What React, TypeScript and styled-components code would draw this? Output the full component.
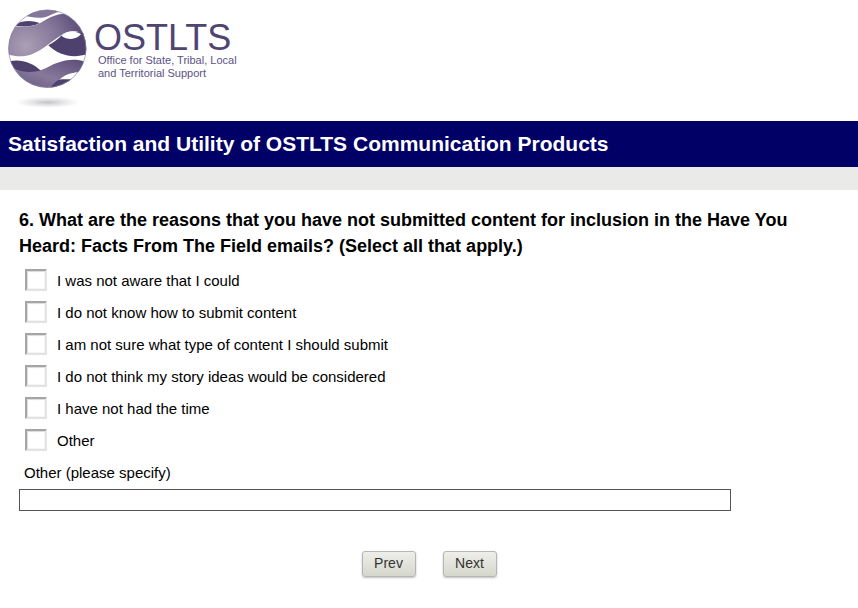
import React from "react";
import styled, { createGlobalStyle } from "styled-components";

const GlobalStyle = createGlobalStyle`
  *, *::before, *::after { box-sizing: border-box; }
  body {
    margin: 0;
    background: #fff;
    color: #000;
    font-family: "Liberation Sans", Arial, Helvetica, sans-serif;
  }
`;

const Brand = styled.header`
  display: flex;
  align-items: flex-start;
  height: 121px;
`;

const Emblem = styled.svg`
  flex: none;
  width: 94px;
  height: 115px;
`;

const BrandText = styled.div`
  display: flex;
  flex-direction: column;
  padding-top: 21px;
  color: #4f4571;
`;

const BrandName = styled.div`
  font-size: 36px;
  line-height: 33px;
`;

const Tagline = styled.div`
  padding-left: 4px;
  font-size: 11px;
  line-height: 13px;
  color: #5c5286;
`;

const TitleBar = styled.h1`
  margin: 0;
  padding: 10px 8px;
  background: #000066;
  color: #fff;
  font-size: 21px;
  line-height: 26px;
  font-weight: bold;
`;

const Divider = styled.div`
  height: 23px;
  background: #eaeae8;
`;

const Form = styled.form`
  padding: 17px 19px 24px;
`;

const Question = styled.fieldset`
  margin: 0;
  padding: 0;
  border: 0;
  min-width: 0;
`;

const Prompt = styled.legend`
  padding: 0;
  font-size: 18px;
  line-height: 26px;
  font-weight: bold;
`;

const Options = styled.ul`
  list-style: none;
  margin: 0;
  padding: 5px 0 0 6px;
`;

const Option = styled.label`
  display: flex;
  align-items: center;
  gap: 10px;
  width: fit-content;
  height: 32px;
  font-size: 15px;
  line-height: 18px;
`;

const OptionText = styled.span`
  padding-top: 1px;
`;

const Tick = styled.input`
  appearance: none;
  flex: none;
  width: 22px;
  height: 22px;
  margin: 0;
  background: #fff;
  border: 2px solid;
  border-color: #a5a5a5 #e3e3e3 #e3e3e3 #a5a5a5;
  box-shadow: inset 1px 1px 1px #dcdcdc, inset -1px -1px 1px #f3f3f3;

  &:checked { background: #000066; }
`;

const OtherField = styled.div`
  display: flex;
  flex-direction: column;
  align-items: flex-start;
  gap: 7px;
  padding-top: 8px;
`;

const OtherLabel = styled.label`
  padding-left: 5px;
  font-size: 15px;
  line-height: 18px;
`;

const OtherInput = styled.input`
  width: 712px;
  max-width: 100%;
  height: 22px;
  padding: 0 4px;
  border: 1px solid #555;
  background: #fff;
  font: inherit;
  font-size: 15px;
`;

const Actions = styled.div`
  display: flex;
  justify-content: center;
  gap: 27px;
  padding-top: 40px;
`;

const NavButton = styled.button`
  width: 54px;
  height: 26px;
  padding: 0 0 2px;
  border: 1px solid #b5b5b5;
  border-radius: 3px;
  background: linear-gradient(#efefea, #d5d6cb);
  box-shadow: 0 1px 2px rgba(0, 0, 0, 0.25);
  color: #333;
  font-family: inherit;
  font-size: 14px;
  line-height: 18px;
`;

const reasons = [
  "I was not aware that I could",
  "I do not know how to submit content",
  "I am not sure what type of content I should submit",
  "I do not think my story ideas would be considered",
  "I have not had the time",
  "Other",
];

function GlobeEmblem() {
  return (
    <Emblem viewBox="0 0 282 345" aria-hidden="true">
      <defs>
        <radialGradient id="band" gradientUnits="userSpaceOnUse" cx="78" cy="138" r="175">
          <stop offset="0" stopColor="#aa9fb4" />
          <stop offset="0.55" stopColor="#84769a" />
          <stop offset="1" stopColor="#5a4d78" />
        </radialGradient>
        <linearGradient id="lower" x1="0" y1="1" x2="1" y2="0">
          <stop offset="0" stopColor="#62557f" />
          <stop offset="0.45" stopColor="#87799b" />
          <stop offset="1" stopColor="#5a4d78" />
        </linearGradient>
        <radialGradient id="ground">
          <stop offset="0" stopColor="#c2c2c6" />
          <stop offset="0.5" stopColor="#e6e6e8" />
          <stop offset="1" stopColor="#fff" />
        </radialGradient>
        <clipPath id="sphere">
          <circle cx="142" cy="146" r="117" />
        </clipPath>
      </defs>
      <ellipse cx="143" cy="307" rx="96" ry="17" fill="url(#ground)" />
      <circle cx="142" cy="146" r="117" fill="#fff" />
      <g clipPath="url(#sphere)">
        <path d="M80 49C105 54 130 57 152 45C166 37 182 33 200 34L180 20H110Z" fill="#84769a" />
        <path d="M48 73C68 61 94 60 119 69C101 79 76 82 44 77Z" fill="#4e416d" />
        <path d="M145 136C162 127 175 117 185 106C205 95 228 93 262 100V162C222 176 178 168 145 136Z" fill="#4e416d" />
        <path d="M20 77C60 81 91 84 122 68C150 53 172 38 205 42L245 60L270 120C256 104 243 97 226 94C208 92 195 97 181 107C151 127 128 149 99 161C70 173 45 170 20 161Z" fill="url(#band)" />
        <path d="M184 107C200 92 226 90 243 103C228 120 203 121 184 107Z" fill="#fff" />
        <path d="M28 184C62 176 95 187 123 212C99 224 66 222 38 204Z" fill="#4e416d" />
        <path d="M34 205C78 222 111 218 140 203C179 183 212 173 251 184L246 216C215 216 190 226 168 264H90Z" fill="url(#lower)" />
        <path d="M178 240C196 222 218 216 246 218L224 240Z" fill="#fff" />
        <path d="M178 239C192 236 206 240 224 236L190 264H150C160 251 169 242 178 239Z" fill="#4e416d" />
      </g>
      <circle cx="142" cy="146" r="116" fill="none" stroke="#8a809f" strokeWidth="2" />
    </Emblem>
  );
}

export default function App() {
  return (
    <>
      <GlobalStyle />
      <Brand>
        <GlobeEmblem />
        <BrandText>
          <BrandName>OSTLTS</BrandName>
          <Tagline>
            Office for State, Tribal, Local
            <br />
            and Territorial Support
          </Tagline>
        </BrandText>
      </Brand>
      <main>
        <TitleBar>Satisfaction and Utility of OSTLTS Communication Products</TitleBar>
        <Divider />
        <Form onSubmit={(event) => event.preventDefault()}>
          <Question>
            <Prompt>
              6. What are the reasons that you have not submitted content for inclusion in the Have You
              Heard: Facts From The Field emails? (Select all that apply.)
            </Prompt>
            <Options>
              {reasons.map((reason, index) => (
                <li key={reason}>
                  <Option htmlFor={`reason-${index}`}>
                    <Tick type="checkbox" id={`reason-${index}`} name="reasons" value={reason} />
                    <OptionText>{reason}</OptionText>
                  </Option>
                </li>
              ))}
            </Options>
            <OtherField>
              <OtherLabel htmlFor="other">Other (please specify)</OtherLabel>
              <OtherInput id="other" name="other" type="text" />
            </OtherField>
          </Question>
          <Actions>
            <NavButton type="button">Prev</NavButton>
            <NavButton type="submit">Next</NavButton>
          </Actions>
        </Form>
      </main>
    </>
  );
}
